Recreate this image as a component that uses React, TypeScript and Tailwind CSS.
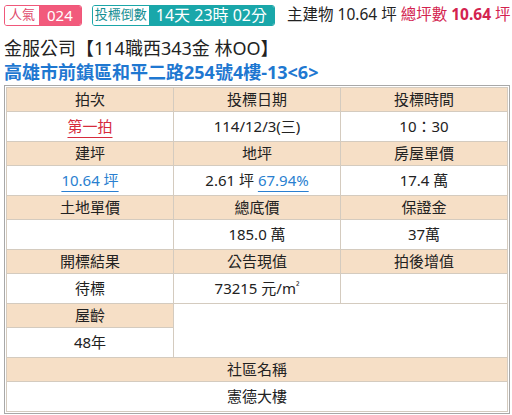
import React from 'react'

const font = { fontFamily: '"Noto Sans", "Noto Sans CJK TC", sans-serif' }

function Head({ children, span = 1 }: { children?: React.ReactNode; span?: number }) {
  return (
    <td colSpan={span} className="h-[24px] border border-[#d4cbbf] bg-[#f6dfc6] p-0 text-center text-[15px] leading-none text-[#222]">
      {children}
    </td>
  )
}

function Cell({ children, span = 1 }: { children?: React.ReactNode; span?: number }) {
  return (
    <td colSpan={span} className="h-[30px] border border-[#d4cbbf] bg-white p-0 text-center text-[15px] leading-none text-[#222]">
      {children}
    </td>
  )
}

export default function App() {
  return (
    <div className="w-[512px] h-[415px] bg-white px-[4px] pt-[4px]" style={font}>
      {/* badges row */}
      <div className="flex items-center h-[22px] whitespace-nowrap">
        <div className="flex shrink-0 h-[21px] items-stretch overflow-hidden rounded-[3px] border border-[#f0577a]">
          <span className="flex items-center px-[4px] text-[13px] text-[#e0476b] bg-white">人氣</span>
          <span className="flex items-center bg-[#f25a7c] px-[8px] text-[15px] text-white">024</span>
        </div>
        <div className="ml-[10px] flex shrink-0 h-[21px] items-stretch overflow-hidden rounded-[3px] border border-[#1ba6a8]">
          <span className="flex items-center px-[2px] text-[13px] text-[#168f93] bg-white">投標倒數</span>
          <span className="flex items-center bg-[#19a7aa] px-[7px] text-[16px] text-white">14天 23時 02分</span>
        </div>
        <div className="ml-[12px] shrink-0 text-[15.5px] text-[#222]">主建物 10.64 坪</div>
        <div className="ml-[4px] shrink-0 text-[15.5px] text-[#d3234f]">
          總坪數 <span className="font-bold">10.64</span> 坪
        </div>
      </div>

      <div className="mt-[10px] text-[18px] leading-[24px] text-[#222]">金服公司【114職西343金 林OO】</div>
      <div className="text-[18px] leading-[24px] font-bold text-[#1f78d1]">高雄市前鎮區和平二路254號4樓-13&lt;6&gt;</div>

      <div className="mt-px w-[506px] border border-[#a8a8a8] p-px">
        <table className="w-full table-fixed border-collapse">
          <tbody>
            <tr><Head>拍次</Head><Head>投標日期</Head><Head>投標時間</Head></tr>
            <tr>
              <Cell><span className="text-[#d62b3c] underline underline-offset-[5px]">第一拍</span></Cell>
              <Cell>114/12/3(三)</Cell>
              <Cell>10：30</Cell>
            </tr>
            <tr><Head>建坪</Head><Head>地坪</Head><Head>房屋單價</Head></tr>
            <tr>
              <Cell><span className="text-[#2a7fd0] underline underline-offset-[5px]">10.64 坪</span></Cell>
              <Cell>2.61 坪 <span className="text-[#2a7fd0] underline underline-offset-[5px]">67.94%</span></Cell>
              <Cell>17.4 萬</Cell>
            </tr>
            <tr><Head>土地單價</Head><Head>總底價</Head><Head>保證金</Head></tr>
            <tr><Cell></Cell><Cell>185.0 萬</Cell><Cell>37萬</Cell></tr>
            <tr><Head>開標結果</Head><Head>公告現值</Head><Head>拍後增值</Head></tr>
            <tr><Cell>待標</Cell><Cell>73215 元/m<span className="text-[10px] align-top">²</span></Cell><Cell></Cell></tr>
            <tr>
              <Head>屋齡</Head>
              <td colSpan={2} rowSpan={2} className="border border-[#d4cbbf] bg-white p-0"></td>
            </tr>
            <tr><Cell>48年</Cell></tr>
            <tr><Head span={3}>社區名稱</Head></tr>
            <tr><Cell span={3}>憲德大樓</Cell></tr>
          </tbody>
        </table>
      </div>
    </div>
  )
}
